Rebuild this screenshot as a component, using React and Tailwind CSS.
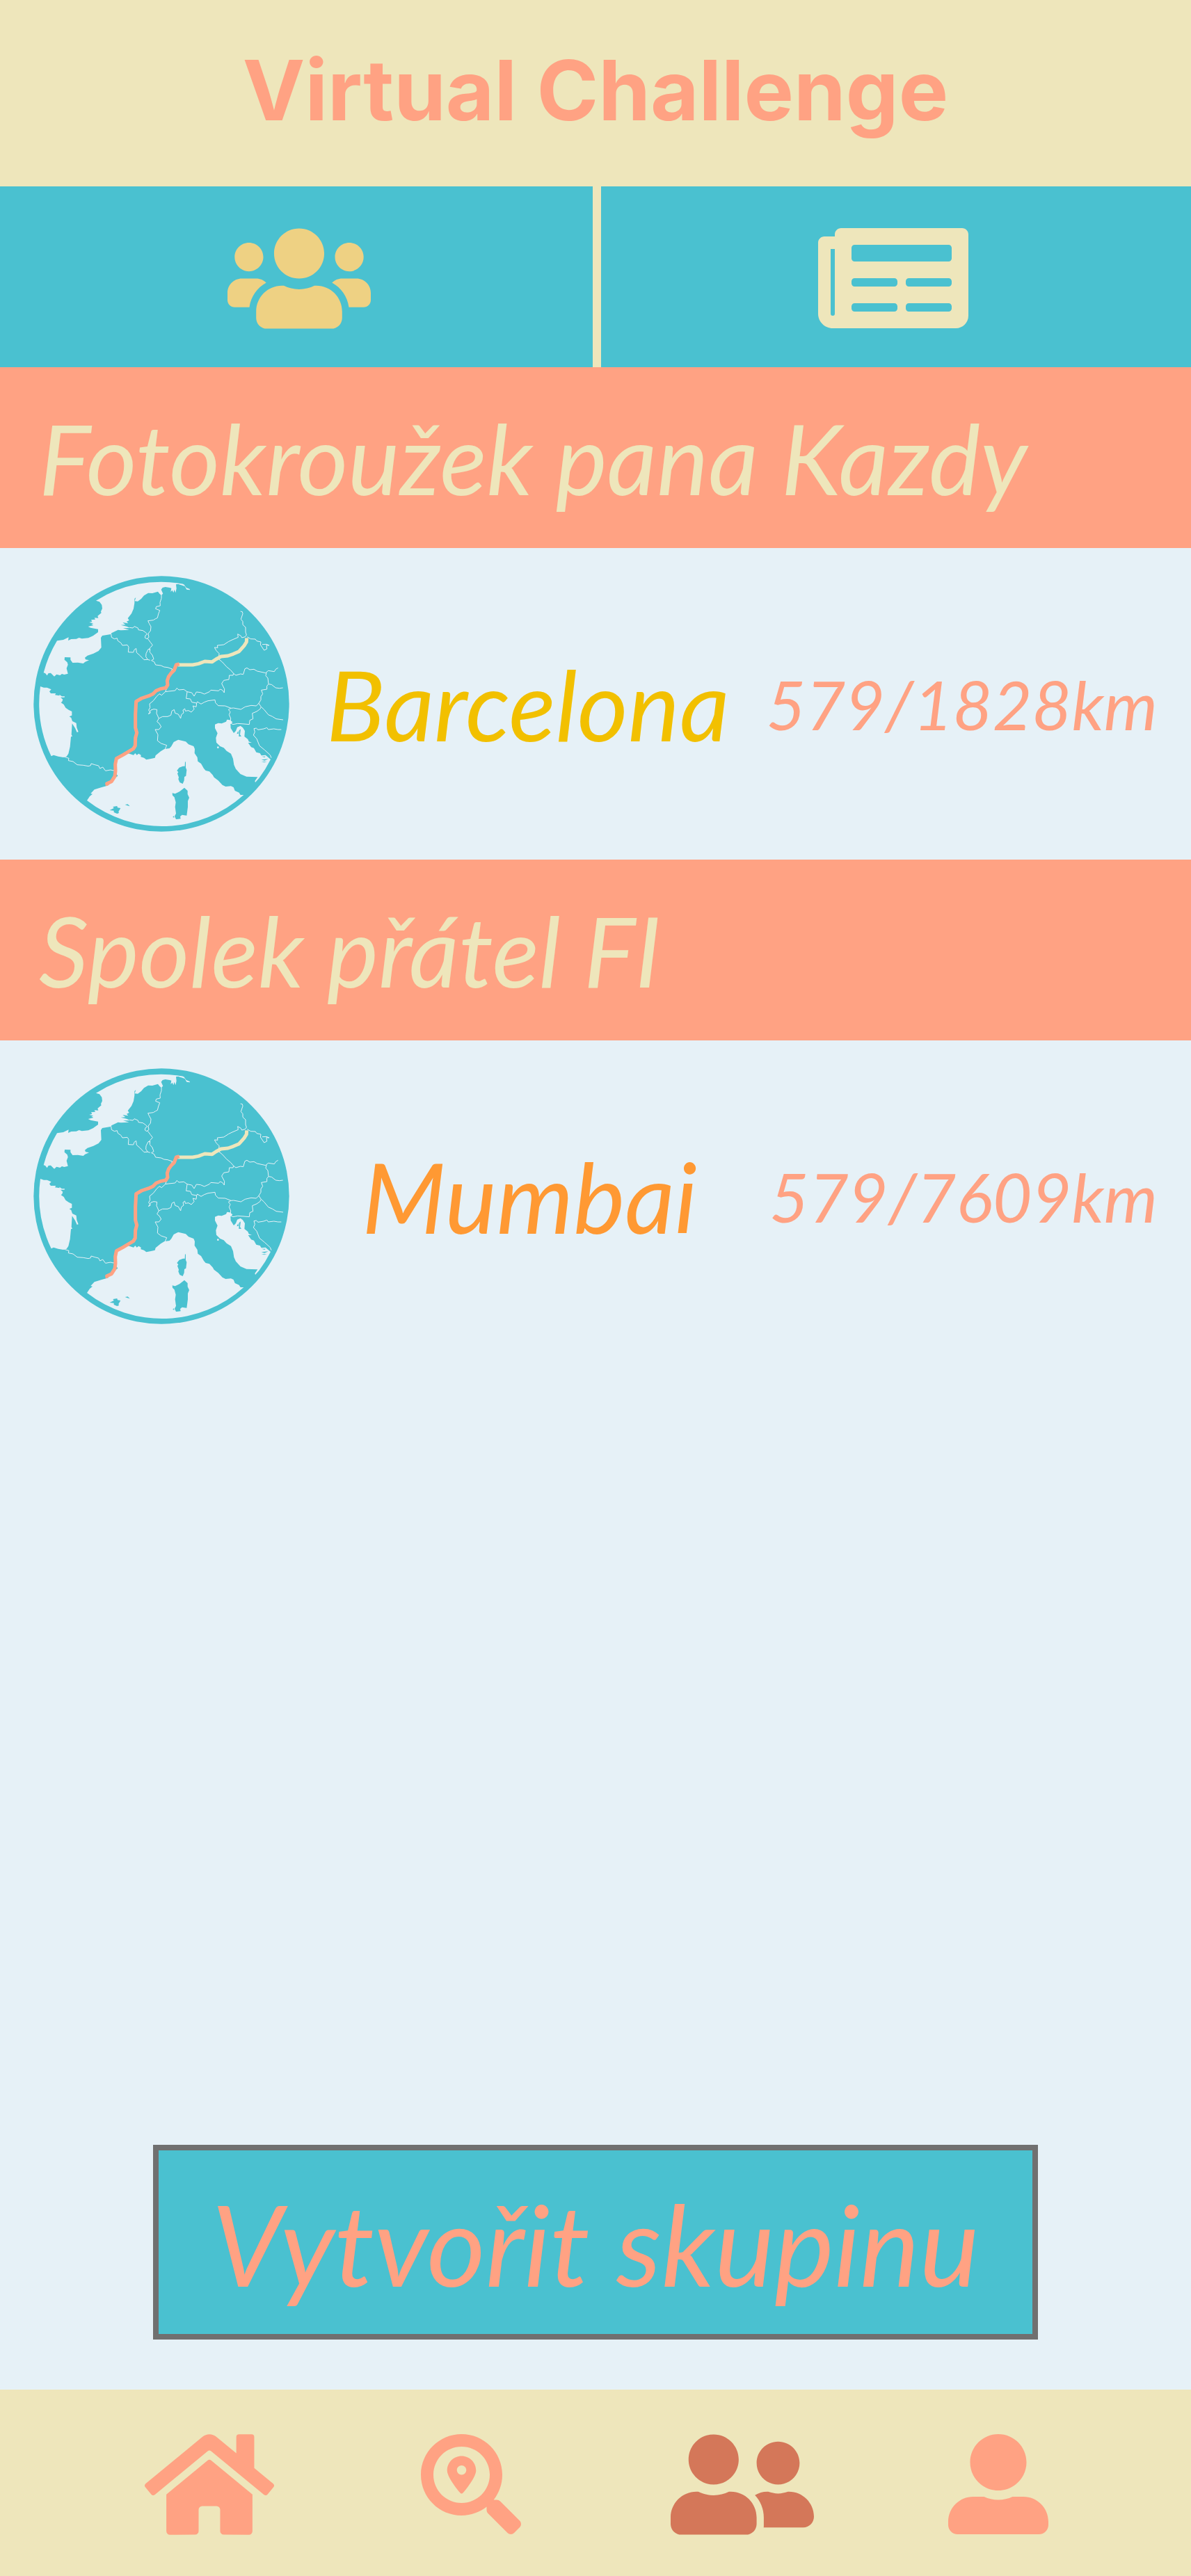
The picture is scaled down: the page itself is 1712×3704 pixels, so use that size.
import React from "react";
import {
  FaUsers,
  FaNewspaper,
  FaHome,
  FaSearchLocation,
  FaUserFriends,
  FaUserAlt,
} from "react-icons/fa";

const SEAS = [
  // North Sea and English Channel
  "M323 160 A527 527 0 0 1 700 88 L690 91 L678 88 L668 90 L670 108 L666 126 L661 112 L657 126 L652 115 L645 122 L648 106 L640 104 L622 101 L610 104 L604 112 L612 130 L604 136 L597 130 L590 121 L566 128 L548 127 L530 138 L518 152 L503 163 L490 162 L495 146 L489 152 L489 170 L485 195 L476 216 L460 236 L466 245 L455 250 L462 258 L438 254 L450 264 L430 265 L455 271 L470 278 L440 279 L466 286 L430 288 L418 286 L390 300 L386 305 L350 311 L344 320 L346 362 L334 377 L312 388 L286 397 L275 406 L278 414 L293 417 L276 424 L268 431 L245 427 L222 428 L213 415 L213 405 L188 404 L187 415 L199 426 L202 436 L196 452 L202 475 L186 479 L176 476 L168 482 L153 478 L143 487 L128 472 L118 473 L112 483 L104 473 L97 471 A527 527 0 0 1 155 333 L182 329 L205 318 L203 332 L216 326 L238 325 L250 320 L262 324 L290 321 L310 312 L332 296 L332 283 L300 277 L289 272 L312 266 L303 261 L312 258 L294 254 L306 250 L302 243 L320 241 L316 234 L333 235 L330 226 L346 213 L344 207 L350 194 L348 178 L338 165 Z",
  // Bay of Biscay
  "M83 530 L98 535 L112 535 L130 543 L122 552 L128 560 L150 560 L146 567 L166 570 L165 565 L176 573 L188 573 L187 577 L170 577 L180 586 L177 595 L172 600 L184 608 L192 622 L205 631 L219 638 L219 655 L208 660 L216 665 L221 680 L238 688 L240 708 L247 726 L241 728 L233 710 L220 690 L217 738 L221 745 L215 747 L211 790 L204 820 L196 832 L182 836 L160 832 L140 826 L130 831 A527 527 0 0 1 83 530 Z",
  // Western Mediterranean
  "M284 1022 L296 1004 L308 994 L300 992 L316 975 L345 966 L372 958 L392 940 L403 926 L417 916 L410 905 L406 885 L404 860 L412 840 L440 828 L462 819 L485 826 L492 818 L499 826 L507 820 L517 826 L516 834 L530 838 L540 846 L560 842 L577 838 L580 828 L602 810 L618 800 L640 797 L648 788 L658 770 L678 760 L710 768 L722 780 L744 788 L749 800 L748 818 L760 836 L762 853 L776 863 L788 884 L796 893 L812 897 L826 912 L832 922 L850 936 L868 955 L882 962 L905 960 L916 965 L922 980 L940 988 L946 998 L960 998 A527 527 0 0 1 284 1022 Z",
  // Adriatic
  "M836 694 L850 688 L865 690 L884 682 L888 673 L900 675 L912 684 L903 693 L904 710 L917 731 L926 722 L932 706 L946 700 L956 708 L965 722 L963 746 L978 758 L982 768 L995 773 L979 773 L992 792 L1004 796 L1014 814 L1030 818 L1036 828 L1054 826 L1076 845 A527 527 0 0 1 1026 926 L1010 944 L1008 938 L1020 921 L972 919 L946 908 L926 886 L918 868 L914 842 L905 820 L886 808 L874 795 L858 788 L842 772 L840 752 L847 732 L836 710 Z",
  "M670 86 L702 90 L712 104 L727 110 L728 114 L714 112 L706 98 Z",
];

const ISLANDS = [
  // Corsica
  "M707 853 L710 858 L710 880 L714 890 L711 916 L704 920 L703 936 L697 950 L684 944 L678 930 L680 922 L674 906 L678 900 L672 893 L682 880 L698 874 L706 874 Z",
  // Sardinia
  "M704 967 L718 980 L718 995 L725 1010 L719 1024 L719 1050 L714 1087 L694 1084 L686 1091 L688 1101 L668 1103 L662 1090 L668 1078 L664 1050 L667 1030 L661 1008 L653 1000 L652 990 L664 993 L684 983 Z",
  // Balearic Islands
  "M382 1064 L400 1055 L396 1049 L414 1046 L416 1053 L429 1055 L420 1070 L422 1076 L414 1079 L400 1073 L400 1066 Z",
  "M448 1040 L460 1038 L469 1047 L458 1044 Z",
  "M654 1094 L658 1088 L661 1096 Z",
  // Dalmatian islands
  "M940 720 L947 714 L944 738 L950 745 L939 746 Z",
  "M930 735 L936 722 L938 733 Z",
  "M1038 832 L1054 832 L1050 836 Z",
  "M1036 846 L1066 843 L1050 850 Z",
  "M1036 855 L1060 855 L1048 858 Z",
];

const BORDERS = [
  "M605 130 L605 150 L599 168 L600 182 L583 186 L580 195 L598 202 L592 218 L588 234 L580 238 L570 244 L547 247 L552 258 L560 272 L558 290 L548 302 L551 318 L542 325 L534 320 L536 310 L545 304",
  "M468 276 L482 278 L488 271 L504 278 L506 286 L525 289 L538 298 L543 304",
  "M388 303 L390 318 L402 325 L414 322 L417 333 L430 342 L437 353 L458 351 L464 360 L462 382 L484 383 L488 372 L496 366 L498 384 L514 398 L530 415 L546 414 L556 417",
  "M546 414 L538 402 L539 388 L548 370 L556 368 L555 382 L566 395 L572 412 L562 418",
  "M546 324 L558 340 L567 352 L556 364 L552 372",
  "M562 418 L574 424 L580 437 L604 440 L616 446 L632 448 L652 455 L640 480 L634 500 L632 530 L622 552",
  "M548 648 L558 644 L550 632 L556 622 L554 605 L570 592 L584 574 L596 562 L606 568 L622 553 L636 551 L664 548 L672 537 L680 545 L702 543 L716 553 L712 582 L730 584 L736 598 L757 602 L755 618 L741 614 L746 628 L734 641 L722 634 L708 636 L706 626 L698 632 L701 644 L691 652 L688 668 L678 650 L664 645 L660 630 L650 636 L646 654 L632 660 L610 660 L594 668 L584 646 L586 630 L572 628 L560 632 L550 650",
  "M594 668 L586 682 L596 690 L604 704 L594 716 L578 716 L590 738 L588 764 L604 776 L628 784 L620 802",
  "M716 553 L736 557 L746 572 L756 554 L774 556 L790 563 L812 553 L818 546 L852 549 L858 542 L868 546 L876 557 L877 541 L865 518 L874 504 L896 500 L898 482 L914 482 L916 474",
  "M916 474 L904 460 L886 445 L868 425 L852 412 L854 388 L842 376 L834 362 L848 363 L846 353 L874 350 L894 337 L908 330 L936 318 L934 304 L948 312 L952 320 L966 316 L972 308 L968 296 L968 275 L956 264 L956 250 L948 240 L956 216 L954 208 L946 206",
  "M975 316 L990 325 L1010 326 L1016 334 L1034 338 L1032 350 L1048 374 L1060 368 L1058 352 L1070 353 L1058 348 L1040 349",
  "M916 474 L926 482 L946 476 L958 478 L965 454 L974 450 L986 458 L1004 456 L1018 464 L1046 470 L1054 472 L1066 462 L1092 466 L1098 456 L1108 450",
  "M1058 470 L1055 484 L1064 494 L1067 520 L1060 528 L1060 542 L1036 546 L1042 562 L1034 574 L1034 588 L1024 604",
  "M1067 520 L1080 522 L1098 536 L1114 538 L1129 536",
  "M757 602 L760 596 L776 606 L790 598 L806 592 L836 588 L838 600 L850 613 L880 614 L905 624 L916 623 L948 629 L966 618 L992 612 L1014 614 L1024 604",
  "M905 624 L894 630 L902 640 L897 652 L904 668 L902 688 L914 694 L934 690 L962 692 L984 694 L986 676 L1000 670 L997 646 L1016 638 L1030 628 L1035 618 L1024 602",
  "M1035 618 L1048 630 L1066 652 L1084 660 L1100 670 L1130 674",
  "M1122 716 L1108 716 L1090 713 L1066 716 L1060 708 L1046 713 L1022 717 L1014 710 L1004 712 L1008 726 L1002 740 L1016 756 L1028 786 L1050 804 L1074 826 L1079 838",
  "M186 834 L206 840 L204 850 L224 854 L242 868 L268 870 L290 874 L300 871 L302 863 L318 868 L334 872 L340 884 L352 878 L364 894 L386 890 L398 893 L412 886",
];

function RouteMap({ title }) {
  return (
    <svg
      viewBox="53 53 1104 1104"
      className="size-[368px] shrink-0"
      role="img"
      aria-label={title}
    >
      <circle cx="605" cy="605" r="551" fill="#4ac1d0" />
      <g fill="#e6f1f7">
        {SEAS.map((d) => (
          <path key={d} d={d} />
        ))}
        <circle cx="849" cy="793" r="4" />
        <circle cx="747" cy="867" r="3" />
      </g>
      <g fill="#4ac1d0">
        {ISLANDS.map((d) => (
          <path key={d} d={d} />
        ))}
      </g>
      <g fill="none" stroke="#e6f1f7" strokeWidth="3" strokeLinejoin="round">
        {BORDERS.map((d) => (
          <path key={d} d={d} />
        ))}
      </g>
      <g fill="none" strokeWidth="15" strokeLinejoin="round">
        <path
          stroke="#eee6bb"
          d="M676 437 L700 437 L740 437 L765 432 L792 422 L824 424 L840 413 L862 401 L892 398 L915 390 L940 379 L962 354 L972 338 L973 321"
        />
        <path
          stroke="#ffa283"
          d="M372 958 L370 949 L390 940 L404 918 L407 895 L406 866 L411 841 L440 825 L484 799 L492 786 L493 752 L499 730 L493 708 L493 650 L496 595 L520 581 L550 571 L569 562 L582 549 L600 541 L624 536 L632 524 L630 506 L636 488 L646 474 L660 460 L669 437 L682 433"
        />
      </g>
    </svg>
  );
}

const GROUPS = [
  {
    name: "Fotokroužek pana Kazdy",
    goal: "Barcelona",
    goalClass: "text-[#f2c000]",
    progress: "579/1828km",
  },
  {
    name: "Spolek přátel FI",
    goal: "Mumbai",
    goalClass: "text-[#ff9933]",
    progress: "579/7609km",
  },
];

function Group({ group }) {
  return (
    <section>
      <h2 className="flex h-[260px] items-center bg-[#ffa283] px-14 text-[140px] leading-none whitespace-nowrap text-[#eee6bb]">
        {group.name}
      </h2>
      <a href="#map" className="flex items-center justify-between px-12 py-10">
        <RouteMap title={"Mapa trasy " + group.goal} />
        <span className={"text-[140px] leading-none " + group.goalClass}>
          {group.goal}
        </span>
        <span className="text-[98px] leading-none text-[#ffa283]">
          {group.progress}
        </span>
      </a>
    </section>
  );
}

export default function App() {
  return (
    <div className="flex min-h-screen flex-col bg-[#e6f1f7] font-['Lato',sans-serif] italic">
      <header className="flex h-[268px] items-center justify-center bg-[#eee6bb] pb-2">
        <h1 className="font-['Inter',sans-serif] text-[120px] leading-none font-bold text-[#ffa283] not-italic">
          Virtual Challenge
        </h1>
      </header>

      <div className="grid h-[260px] grid-cols-[852fr_860fr] bg-[#4ac1d0]">
        <button
          type="button"
          aria-label="Skupiny"
          className="flex items-center justify-center pt-1 pl-2 text-[#eed183]"
        >
          <FaUsers className="h-[165px] w-[206px]" />
        </button>
        <button
          type="button"
          aria-label="Novinky"
          className="flex items-center justify-center border-l-12 border-[#eee6bb] pt-1 pr-2 text-[#eee6bb]"
        >
          <FaNewspaper className="h-[192px] w-[216px]" />
        </button>
      </div>

      <main className="flex flex-1 flex-col">
        {GROUPS.map((group) => (
          <Group key={group.name} group={group} />
        ))}
        <button
          type="button"
          className="mx-[220px] mt-auto mb-18 h-[280px] border-8 border-[#707070] bg-[#4ac1d0] pt-1 text-[162px] leading-none whitespace-nowrap text-[#ffa283] italic"
        >
          Vytvořit skupinu
        </button>
      </main>

      <nav className="grid h-[268px] grid-cols-[377fr_375fr_404fr_330fr] items-center justify-items-center bg-[#eee6bb] px-28 pt-1 text-[#ffa283]">
        <a href="#home" aria-label="Domů">
          <FaHome className="h-[165px] w-[186px]" />
        </a>
        <a href="#search" aria-label="Hledat">
          <FaSearchLocation className="size-36" />
        </a>
        <a
          href="#groups"
          aria-label="Skupiny"
          aria-current="page"
          className="text-[#d47759]"
        >
          <FaUserFriends className="h-[165px] w-[206px]" />
        </a>
        <a href="#profile" aria-label="Profil">
          <FaUserAlt className="size-36" />
        </a>
      </nav>
    </div>
  );
}
